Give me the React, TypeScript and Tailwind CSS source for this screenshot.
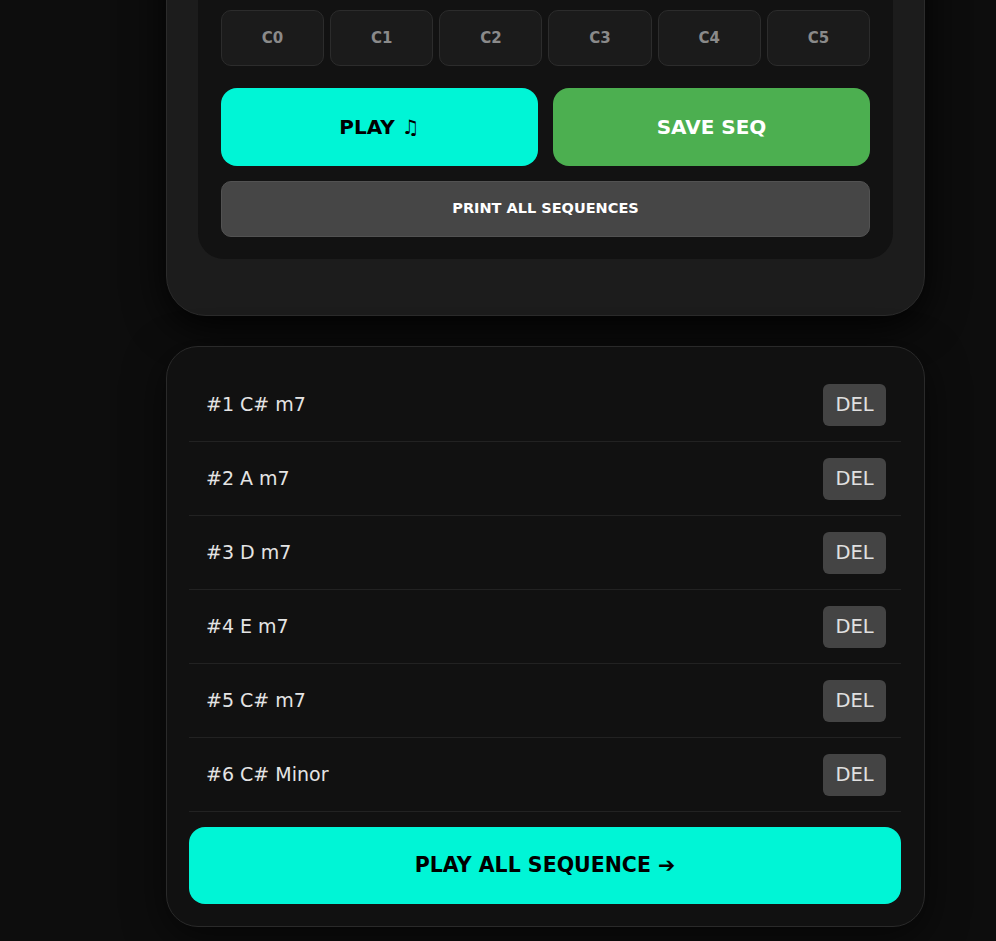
import { useState } from 'react'

const NOTES = ['C0', 'C1', 'C2', 'C3', 'C4', 'C5']

const SEQUENCES = ['C# m7', 'A m7', 'D m7', 'E m7', 'C# m7', 'C# Minor']

export default function App() {
  const [seqs, setSeqs] = useState(SEQUENCES)
  const [octave, setOctave] = useState<string | null>(null)

  return (
    <div
      className="min-h-screen bg-[#0d0d0d] flex flex-col items-start pl-[166px] overflow-hidden"
      style={{ fontFamily: '"DejaVu Sans", Verdana, sans-serif' }}
    >
      {/* Controls card (scrolled, top cut off) */}
      <div className="w-[759px] mt-[-71px] bg-[#1c1c1c] border border-[#2b2b2b] rounded-[40px] px-[31px] pt-8 pb-14 shadow-[0_10px_40px_rgba(0,0,0,0.9)]">
        <div className="bg-[#121212] rounded-[26px] px-[23px] pt-12 pb-[22px]">
          <div className="grid grid-cols-6 gap-[6px]">
            {NOTES.map((n) => (
              <button
                key={n}
                onClick={() => setOctave(n)}
                className={`h-[56px] rounded-[10px] border text-[15px] font-bold ${
                  octave === n
                    ? 'bg-[#2a2a2a] border-[#444] text-white'
                    : 'bg-[#1b1b1b] border-[#2c2c2c] text-[#8a8a8a]'
                }`}
              >
                {n}
              </button>
            ))}
          </div>

          <div className="grid grid-cols-2 gap-[15px] mt-[22px]">
            <button className="h-[78px] rounded-[16px] bg-[#00f5d6] text-black text-[20px] font-bold">
              PLAY ♫
            </button>
            <button className="h-[78px] rounded-[16px] bg-[#4caf50] text-white text-[20px] font-bold">
              SAVE SEQ
            </button>
          </div>

          <button className="w-full h-[56px] mt-[15px] rounded-[10px] bg-[#464646] border border-[#525252] text-white text-[14.5px] font-bold">
            PRINT ALL SEQUENCES
          </button>
        </div>
      </div>

      {/* Saved sequences */}
      <div className="w-[759px] mt-[30px] mb-4 bg-[#111111] border border-[#2a2a2a] rounded-[32px] pl-[22px] pr-[23px] pt-[21px] pb-[22px] shadow-[0_10px_40px_rgba(0,0,0,0.6)]">
        {seqs.map((s, i) => (
          <div
            key={i}
            className="h-[74px] flex items-center justify-between pl-[17px] pr-[15px] border-b border-[#222]"
          >
            <span className="text-[19px] text-[#e4e4e4]">
              #{i + 1} {s}
            </span>
            <button
              onClick={() => setSeqs(seqs.filter((_, j) => j !== i))}
              className="w-[63px] h-[42px] rounded-[6px] bg-[#444] text-[19.5px] text-[#e0e0e0]"
            >
              DEL
            </button>
          </div>
        ))}

        <button className="w-full h-[77px] mt-[15px] rounded-[16px] bg-[#00f5d6] text-black text-[20.5px] font-bold">
          PLAY ALL SEQUENCE ➔
        </button>
      </div>
    </div>
  )
}
